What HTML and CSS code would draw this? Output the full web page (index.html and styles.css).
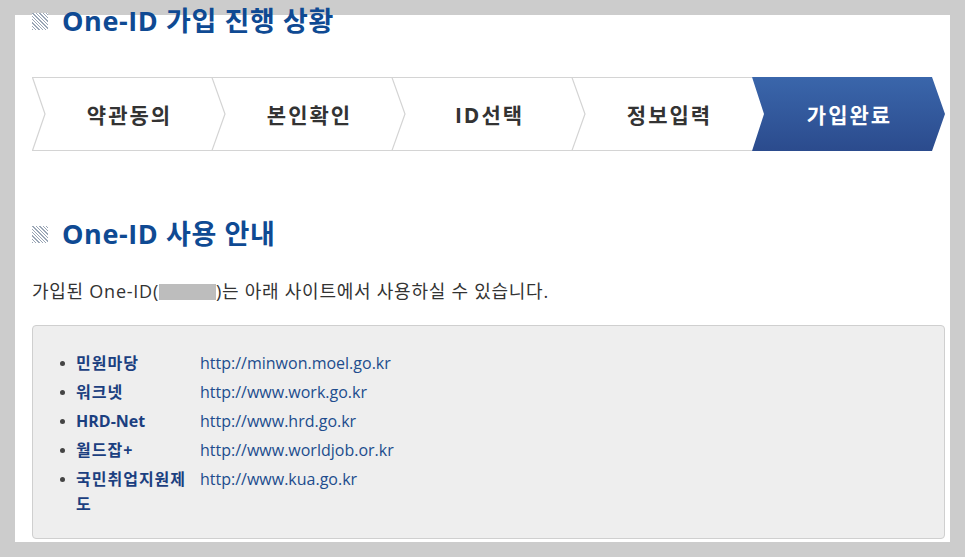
FILE: index.html
```html
<!DOCTYPE html>
<html lang="ko">
<head>
<meta charset="utf-8">
<title>One-ID 가입 완료</title>
<link rel="stylesheet" href="styles.css">
</head>
<body>
<div class="panel">
  <h2 class="title title-first"><span class="hatch"></span>One-ID 가입 진행 상황</h2>

  <div class="steps">
    <div class="step">
      <svg class="step-bg" width="194" height="74" viewBox="0 0 194 74"><polyline points="0,0.5 180,0.5 193,37 180,73.5 0,73.5" fill="none" stroke="#d4d4d4" stroke-width="1.2"/><polyline points="0.5,0.5 13,37 0.5,73.5" fill="none" stroke="#d4d4d4" stroke-width="1.2"/></svg>
      <span class="step-label">약관동의</span>
    </div>
    <div class="step">
      <svg class="step-bg" width="194" height="74" viewBox="0 0 194 74"><polyline points="0,0.5 180,0.5 193,37 180,73.5 0,73.5" fill="none" stroke="#d4d4d4" stroke-width="1.2"/></svg>
      <span class="step-label">본인확인</span>
    </div>
    <div class="step">
      <svg class="step-bg" width="194" height="74" viewBox="0 0 194 74"><polyline points="0,0.5 180,0.5 193,37 180,73.5 0,73.5" fill="none" stroke="#d4d4d4" stroke-width="1.2"/></svg>
      <span class="step-label">ID선택</span>
    </div>
    <div class="step">
      <svg class="step-bg" width="194" height="74" viewBox="0 0 194 74"><polyline points="0,0.5 180,0.5" fill="none" stroke="#d4d4d4" stroke-width="1.2"/><polyline points="0,73.5 180,73.5" fill="none" stroke="#d4d4d4" stroke-width="1.2"/></svg>
      <span class="step-label">정보입력</span>
    </div>
    <div class="step step-active">
      <svg class="step-bg" width="194" height="74" viewBox="0 0 194 74"><defs><linearGradient id="act" x1="0" y1="0" x2="0" y2="1"><stop offset="0" stop-color="#3a66ab"/><stop offset="1" stop-color="#2b4b8d"/></linearGradient></defs><polygon points="0,0 180,0 193,37 180,74 0,74 12,37" fill="url(#act)"/></svg>
      <span class="step-label">가입완료</span>
    </div>
  </div>

  <h2 class="title title-second"><span class="hatch"></span>One-ID 사용 안내</h2>

  <p class="intro">가입된 One-ID(<span class="masked"></span>)는 아래 사이트에서 사용하실 수 있습니다.</p>

  <div class="site-box">
    <ul class="site-list">
      <li><span class="site-name">민원마당</span><span class="site-url">http://minwon.moel.go.kr</span></li>
      <li><span class="site-name">워크넷</span><span class="site-url">http://www.work.go.kr</span></li>
      <li><span class="site-name site-name-latin">HRD-Net</span><span class="site-url">http://www.hrd.go.kr</span></li>
      <li><span class="site-name">월드잡+</span><span class="site-url">http://www.worldjob.or.kr</span></li>
      <li><span class="site-name">국민취업지원제도</span><span class="site-url">http://www.kua.go.kr</span></li>
    </ul>
  </div>
</div>
</body>
</html>
```

FILE: styles.css
```css
html, body {
  margin: 0;
  padding: 0;
}
body {
  background: #cccccc;
  padding: 15px;
  font-family: "Open Sans", "Noto Sans CJK KR", sans-serif;
  color: #333333;
}
.panel {
  display: flow-root;
  background: #ffffff;
  width: 935px;
  height: 527px;
  box-sizing: border-box;
  padding: 0 5px 0 17px;
}
.title {
  margin: 0;
  display: flex;
  align-items: center;
  font-size: 27px;
  line-height: 30px;
  font-weight: 700;
  color: #0f4a93;
  letter-spacing: 0.6px;
}
.title-first {
  margin-top: -9px;
}
.title-second {
  margin-top: 68px;
}
.hatch {
  display: inline-block;
  flex: 0 0 16px;
  width: 16px;
  height: 17px;
  margin-right: 14px;
  background: repeating-linear-gradient(45deg, #9aa6b6 0 1px, #ffffff 1px 2.4px);
}
.steps {
  display: flex;
  margin-top: 41px;
  height: 74px;
}
.step {
  position: relative;
  flex: 0 0 180px;
  height: 74px;
  display: flex;
  align-items: center;
  justify-content: center;
  padding-left: 15px;
  box-sizing: border-box;
}
.step-bg {
  position: absolute;
  left: 0;
  top: 0;
  overflow: visible;
}
.step-label {
  position: relative;
  font-size: 21px;
  font-weight: 700;
  color: #333333;
  letter-spacing: 2px;
}
.step-active .step-label {
  color: #ffffff;
}
.intro {
  margin: 27px 0 0;
  font-size: 18px;
  line-height: 30px;
  letter-spacing: 0.75px;
  color: #333333;
}
.masked {
  display: inline-block;
  width: 57px;
  height: 16px;
  background: #bdbdbd;
  vertical-align: -2px;
}
.site-box {
  margin-top: 19px;
  width: 913px;
  box-sizing: border-box;
  background: #eeeeee;
  border: 1px solid #cfcfcf;
  border-radius: 4px;
  padding: 25px 0 21px 43px;
}
.site-list {
  list-style: none;
  margin: 0;
  padding: 0;
}
.site-list li {
  display: flex;
  position: relative;
  font-size: 16px;
  line-height: 25px;
  margin-bottom: 4px;
}
.site-list li:last-child {
  margin-bottom: 0;
}
.site-list li::before {
  content: "";
  position: absolute;
  left: -16px;
  top: 10px;
  width: 5px;
  height: 5px;
  border-radius: 50%;
  background: #444444;
}
.site-name {
  flex: 0 0 124px;
  font-weight: 700;
  color: #1b3f80;
  letter-spacing: 1px;
}
.site-name-latin {
  letter-spacing: 0;
}
.site-url {
  color: #214c8d;
}
```
